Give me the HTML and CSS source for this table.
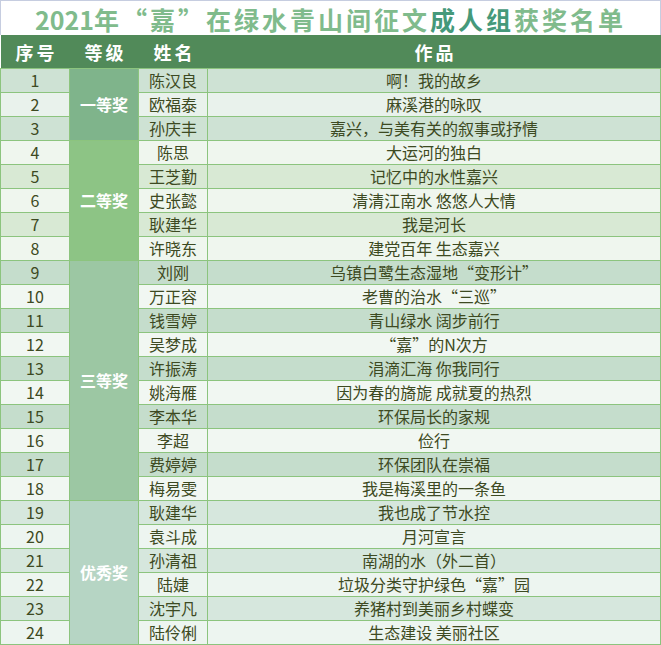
FILE: index.html
```html
<!DOCTYPE html>
<html lang="zh">
<head>
<meta charset="utf-8">
<title>获奖名单</title>
<link rel="stylesheet" href="styles.css">
</head>
<body>
<div class="sheet">
  <div class="title"><span class="num">2021</span>年“嘉”在绿水青山间征文<span class="dark">成人组</span>获奖名单</div>
  <table class="list">
    <colgroup><col class="c1"><col class="c2"><col class="c3"><col class="c4"></colgroup>
    <thead>
      <tr><th>序号</th><th>等级</th><th>姓名</th><th>作品</th></tr>
    </thead>
    <tbody>
      <tr class="g1 a"><td>1</td><td class="grade gr1" rowspan="3">一等奖</td><td>陈汉良</td><td>啊！我的故乡</td></tr>
      <tr class="g1 b"><td>2</td><td>欧福泰</td><td>麻溪港的咏叹</td></tr>
      <tr class="g1 a"><td>3</td><td>孙庆丰</td><td>嘉兴，与美有关的叙事或抒情</td></tr>
      <tr class="g2 b"><td>4</td><td class="grade gr2" rowspan="5">二等奖</td><td>陈思</td><td>大运河的独白</td></tr>
      <tr class="g2 a"><td>5</td><td>王芝勤</td><td>记忆中的水性嘉兴</td></tr>
      <tr class="g2 b"><td>6</td><td>史张懿</td><td>清清江南水 悠悠人大情</td></tr>
      <tr class="g2 a"><td>7</td><td>耿建华</td><td>我是河长</td></tr>
      <tr class="g2 b"><td>8</td><td>许晓东</td><td>建党百年 生态嘉兴</td></tr>
      <tr class="g3 a"><td>9</td><td class="grade gr3" rowspan="10">三等奖</td><td>刘刚</td><td>乌镇白鹭生态湿地“变形计”</td></tr>
      <tr class="g3 b"><td>10</td><td>万正容</td><td>老曹的治水“三巡”</td></tr>
      <tr class="g3 a"><td>11</td><td>钱雪婷</td><td>青山绿水 阔步前行</td></tr>
      <tr class="g3 b"><td>12</td><td>吴梦成</td><td>“嘉”的N次方</td></tr>
      <tr class="g3 a"><td>13</td><td>许振涛</td><td>涓滴汇海 你我同行</td></tr>
      <tr class="g3 b"><td>14</td><td>姚海雁</td><td>因为春的旖旎 成就夏的热烈</td></tr>
      <tr class="g3 a"><td>15</td><td>李本华</td><td>环保局长的家规</td></tr>
      <tr class="g3 b"><td>16</td><td>李超</td><td>俭行</td></tr>
      <tr class="g3 a"><td>17</td><td>费婷婷</td><td>环保团队在崇福</td></tr>
      <tr class="g3 b"><td>18</td><td>梅易雯</td><td>我是梅溪里的一条鱼</td></tr>
      <tr class="g4 a"><td>19</td><td class="grade gr4" rowspan="6">优秀奖</td><td>耿建华</td><td>我也成了节水控</td></tr>
      <tr class="g4 b"><td>20</td><td>袁斗成</td><td>月河宣言</td></tr>
      <tr class="g4 a"><td>21</td><td>孙清祖</td><td>南湖的水（外二首）</td></tr>
      <tr class="g4 b"><td>22</td><td>陆婕</td><td>垃圾分类守护绿色“嘉”园</td></tr>
      <tr class="g4 a"><td>23</td><td>沈宇凡</td><td>养猪村到美丽乡村蝶变</td></tr>
      <tr class="g4 b"><td>24</td><td>陆伶俐</td><td>生态建设 美丽社区</td></tr>
    </tbody>
  </table>
</div>
</body>
</html>
```

FILE: styles.css
```css
html, body {
  margin: 0;
  padding: 0;
  background: #ffffff;
}

.sheet {
  width: 661px;
  font-family: "Noto Sans CJK SC", "Noto Sans", sans-serif;
}

.title {
  box-sizing: border-box;
  height: 35px;
  border: 1px solid #c6cde0;
  border-bottom: none;
  text-align: center;
  font-size: 25px;
  font-weight: 700;
  line-height: 36px;
  letter-spacing: 3px;
  color: #80bb8c;
  white-space: nowrap;
}

.title .num {
  letter-spacing: 0;
}

.title .dark {
  color: #45997a;
}

.list {
  width: 661px;
  border-collapse: collapse;
  table-layout: fixed;
}

.c1, .c2, .c3 { width: 69px; }
.c4 { width: 453px; }

.list th {
  height: 33px;
  padding: 0 0 0 3px;
  background: #518a59;
  color: #ffffff;
  font-size: 18px;
  font-weight: 700;
  letter-spacing: 3px;
  text-align: center;
  border: none;
  border-bottom: 1px solid #8cc47e;
}

.list td {
  height: 23px;
  padding: 0;
  border: 1px solid #8cc47e;
  text-align: center;
  font-size: 16px;
  line-height: 23px;
  color: #3d4a22;
  white-space: nowrap;
}

.g1.a td { background: #cee2d4; }
.g1.b td { background: #e9f2ec; }
.g2.a td { background: #d8e9d4; }
.g2.b td { background: #eff6ee; }
.g3.a td { background: #c5ddcc; }
.g3.b td { background: #f1f7f2; }
.g4.a td { background: #d6e7dd; }
.g4.b td { background: #edf5f0; }

.list td.grade {
  color: #ffffff;
  font-weight: 700;
  font-size: 16px;
}

.g1 td.gr1 { background: #7fb48b; border-top-color: #7fb48b; }
.g2 td.gr2 { background: #8dc485; border-top-color: #8dc485; }
.g3 td.gr3 { background: #9cc7a3; border-top-color: #9cc7a3; }
.g4 td.gr4 { background: #b6d5c4; border-top-color: #ffffff; }
```
